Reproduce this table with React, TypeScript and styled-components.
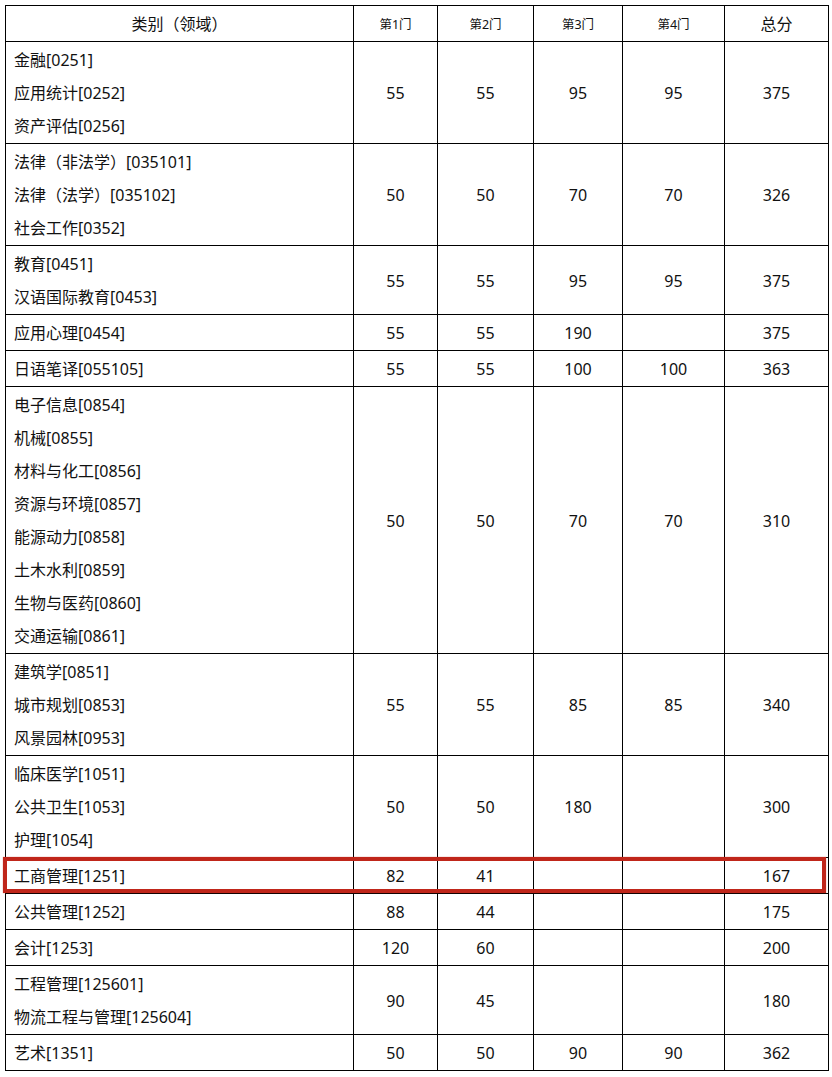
import React from "react";
import styled, { createGlobalStyle } from "styled-components";

const GlobalStyle = createGlobalStyle`
  html, body { margin: 0; padding: 0; background: #fff; }
  body {
    font-family: "Noto Sans", "Noto Sans CJK SC", sans-serif;
    color: #111;
  }
`;

const Page = styled.div`
  padding: 5px 0 0 5px;
`;

const Table = styled.table`
  border-collapse: collapse;
  width: 823px;
  table-layout: fixed;
  font-size: 16px;
`;

const HeadCell = styled.th<{ $small?: boolean }>`
  border: 1px solid #000;
  padding: 2px 0 0;
  height: 33px;
  font-weight: normal;
  text-align: center;
  vertical-align: middle;
  font-size: ${(p) => (p.$small ? "12.5px" : "16px")};
  line-height: 33px;
`;

const Row = styled.tr``;

const NameCell = styled.td`
  border: 1px solid #000;
  padding: 2px 8px 0;
  text-align: left;
  vertical-align: middle;
  position: relative;
`;

const Line = styled.div`
  line-height: 33px;
  height: 33px;
  white-space: nowrap;
`;

const NumCell = styled.td`
  border: 1px solid #000;
  padding: 2px 0 0;
  text-align: center;
  vertical-align: middle;
  line-height: 33px;
`;

const Highlight = styled.span`
  position: absolute;
  left: -3px;
  top: -1px;
  width: 823px;
  height: 36px;
  box-sizing: border-box;
  border: 4px solid #c0261a;
  pointer-events: none;
  box-shadow: 0 0 1px rgba(192, 38, 26, 0.6);
`;

type RowData = {
  names: string[];
  scores: (number | "")[];
  total: number;
  highlight?: boolean;
};

const rows: RowData[] = [
  { names: ["金融[0251]", "应用统计[0252]", "资产评估[0256]"], scores: [55, 55, 95, 95], total: 375 },
  { names: ["法律（非法学）[035101]", "法律（法学）[035102]", "社会工作[0352]"], scores: [50, 50, 70, 70], total: 326 },
  { names: ["教育[0451]", "汉语国际教育[0453]"], scores: [55, 55, 95, 95], total: 375 },
  { names: ["应用心理[0454]"], scores: [55, 55, 190, ""], total: 375 },
  { names: ["日语笔译[055105]"], scores: [55, 55, 100, 100], total: 363 },
  {
    names: [
      "电子信息[0854]",
      "机械[0855]",
      "材料与化工[0856]",
      "资源与环境[0857]",
      "能源动力[0858]",
      "土木水利[0859]",
      "生物与医药[0860]",
      "交通运输[0861]",
    ],
    scores: [50, 50, 70, 70],
    total: 310,
  },
  { names: ["建筑学[0851]", "城市规划[0853]", "风景园林[0953]"], scores: [55, 55, 85, 85], total: 340 },
  { names: ["临床医学[1051]", "公共卫生[1053]", "护理[1054]"], scores: [50, 50, 180, ""], total: 300 },
  { names: ["工商管理[1251]"], scores: [82, 41, "", ""], total: 167, highlight: true },
  { names: ["公共管理[1252]"], scores: [88, 44, "", ""], total: 175 },
  { names: ["会计[1253]"], scores: [120, 60, "", ""], total: 200 },
  { names: ["工程管理[125601]", "物流工程与管理[125604]"], scores: [90, 45, "", ""], total: 180 },
  { names: ["艺术[1351]"], scores: [50, 50, 90, 90], total: 362 },
];

export default function App() {
  return (
    <Page>
      <GlobalStyle />
      <Table>
        <colgroup>
          <col style={{ width: 348 }} />
          <col style={{ width: 84 }} />
          <col style={{ width: 96 }} />
          <col style={{ width: 89 }} />
          <col style={{ width: 102 }} />
          <col style={{ width: 104 }} />
        </colgroup>
        <thead>
          <tr>
            <HeadCell>类别（领域）</HeadCell>
            <HeadCell $small>第1门</HeadCell>
            <HeadCell $small>第2门</HeadCell>
            <HeadCell $small>第3门</HeadCell>
            <HeadCell $small>第4门</HeadCell>
            <HeadCell>总分</HeadCell>
          </tr>
        </thead>
        <tbody>
          {rows.map((r, i) => (
            <Row key={i}>
              <NameCell>
                {r.names.map((n) => (
                  <Line key={n}>{n}</Line>
                ))}
                {r.highlight && <Highlight />}
              </NameCell>
              {r.scores.map((s, j) => (
                <NumCell key={j}>{s}</NumCell>
              ))}
              <NumCell>{r.total}</NumCell>
            </Row>
          ))}
        </tbody>
      </Table>
    </Page>
  );
}
